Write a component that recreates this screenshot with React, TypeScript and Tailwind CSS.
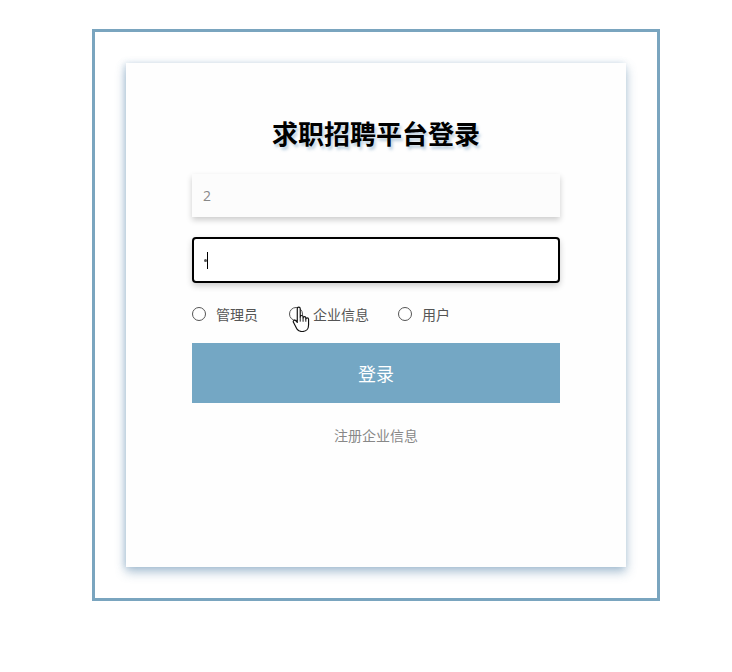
import React from "react";

function Radio({ label }: { label: string }) {
  return (
    <div className="flex items-center">
      <span className="w-[14px] h-[14px] rounded-full border border-[#555] bg-white box-border" />
      <span className="ml-[10px] text-[14px] leading-[20px] text-[#555]">{label}</span>
    </div>
  );
}

function HandCursor() {
  return (
    <svg width="19" height="26" viewBox="0 0 18 24" className="absolute left-[100px] top-[2px]">
      <path
        d="M5 2.2c0-.9.6-1.5 1.4-1.5S7.8 1.3 7.8 2.2V10c.1-.8.6-1.3 1.4-1.3s1.3.6 1.3 1.4v.8c.1-.7.6-1.2 1.3-1.2s1.3.6 1.3 1.4v.9c.1-.6.6-1.1 1.3-1.1.8 0 1.3.6 1.3 1.4v5.4c0 3.6-2.2 6.1-5.6 6.1H9c-2.2 0-3.5-1-4.6-2.7L1.5 15.3c-.5-.8-.3-1.6.3-2 .7-.4 1.4-.2 1.9.4L5 15.3V2.2z"
        fill="#fff"
        stroke="#111"
        strokeWidth="1.1"
        strokeLinejoin="round"
      />
      <path d="M7.8 10v4.5M10.5 10.8v3.8M13.1 11.8v2.8" stroke="#111" strokeWidth="0.9" />
    </svg>
  );
}

export default function App() {
  return (
    <div
      className="w-full h-[672px] bg-white overflow-hidden"
      style={{ fontFamily: '"Noto Sans CJK SC", "Noto Sans", sans-serif' }}
    >
      <div className="ml-[92px] mt-[29px] w-[568px] h-[572px] border-[3px] border-[#7aa5bf] p-[31px] box-border">
        <div className="w-[500px] h-[504px] bg-[#fefefe] flex flex-col items-center pt-[52px] shadow-[0_5px_10px_rgba(70,120,160,0.45),-2px_0_6px_rgba(120,160,190,0.25)]">
          <h1 className="text-[26px] leading-[36px] font-bold text-black [text-shadow:2px_3px_3px_rgba(90,140,180,0.4)]">
            求职招聘平台登录
          </h1>
          <div className="mt-[23px] w-[368px] h-[43px] bg-[#fcfcfc] shadow-[0_3px_6px_rgba(0,0,0,0.2)] flex items-center px-[11px]">
            <span className="text-[14px] text-[#888]" style={{ fontFamily: '"Open Sans", sans-serif' }}>2</span>
          </div>
          <div className="mt-[20px] w-[368px] h-[46px] bg-white border-2 border-black rounded-[4px] shadow-[0_3px_6px_rgba(0,0,0,0.2)] flex items-center px-[10px]">
            <span className="w-[3px] h-[3px] bg-[#555] rounded-full" />
            <span className="w-[1px] h-[17px] bg-black" />
          </div>
          <div className="relative mt-[21px] w-[368px] flex items-center">
            <Radio label="管理员" />
            <div className="ml-[31px]">
              <Radio label="企业信息" />
            </div>
            <div className="ml-[29px]">
              <Radio label="用户" />
            </div>
            <HandCursor />
          </div>
          <button className="mt-[19px] w-[368px] h-[60px] bg-[#74a7c4] text-white text-[18px]">
            登录
          </button>
          <div className="mt-[22px] text-[14px] leading-[20px] text-[#888]">注册企业信息</div>
        </div>
      </div>
    </div>
  );
}
